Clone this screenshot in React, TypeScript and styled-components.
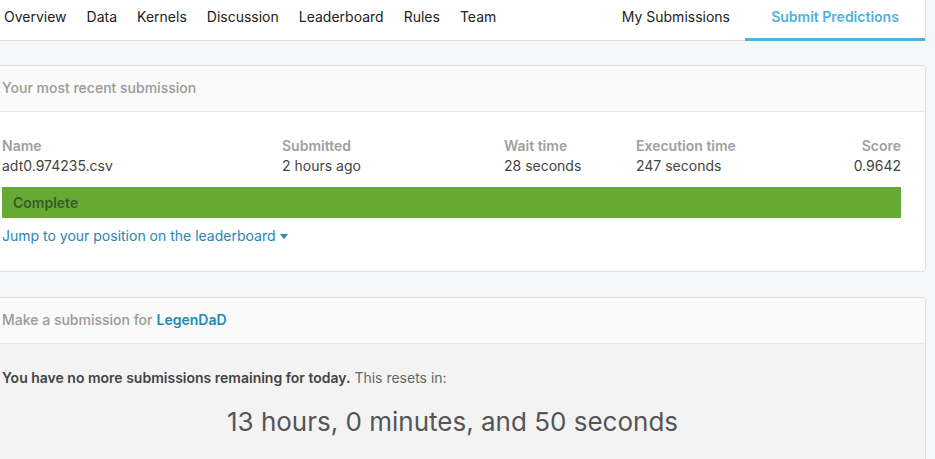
import React from "react";
import styled, { createGlobalStyle } from "styled-components";

const Global = createGlobalStyle`
  html, body { margin: 0; padding: 0; }
  body {
    background: #f5f7f8;
    font-family: Inter, "Liberation Sans", Arial, sans-serif;
    color: #222;
    overflow: hidden;
  }
`;

const Shell = styled.div`
  width: 926px;
`;

const Nav = styled.nav`
  display: flex;
  align-items: stretch;
  height: 41px;
  background: #fff;
  border-bottom: 1px solid #dedede;
  border-right: 1px solid #dedede;
  box-sizing: border-box;
  padding-left: 4px;
`;

const TabGroup = styled.div`
  display: flex;
  gap: 20px;
`;

const Tab = styled.a<{ $active?: boolean }>`
  display: flex;
  align-items: center;
  justify-content: center;
  font-size: 14px;
  font-weight: ${(p) => (p.$active ? 600 : 400)};
  color: ${(p) => (p.$active ? "#4bb2e1" : "#222")};
  padding-bottom: 6px;
  border-bottom: 3px solid ${(p) => (p.$active ? "#4bb2e1" : "transparent")};
  margin-bottom: -1px;
  box-sizing: border-box;
  white-space: nowrap;
`;

const SideTab = styled(Tab)`
  margin-right: 15px;
`;

const ActiveTab = styled(Tab)`
  width: 180px;
`;

const Spacer = styled.div`
  flex: 1;
`;

const Content = styled.main`
  display: flex;
  flex-direction: column;
  gap: 25px;
  padding-top: 24px;
  margin-left: -22px;
  width: 948px;
`;

const Card = styled.section`
  background: #fff;
  border: 1px solid #e0e0e0;
  border-radius: 4px;
  overflow: hidden;
`;

const CardHeader = styled.header`
  display: flex;
  align-items: center;
  height: 46px;
  padding-left: 23px;
  padding-bottom: 2px;
  box-sizing: border-box;
  background: #fafafa;
  border-bottom: 1px solid #e8e8e8;
  font-size: 14px;
  font-weight: 500;
  color: #999;
`;

const UserLink = styled.span`
  color: #1e8ab0;
  font-weight: 600;
  margin-left: 4px;
`;

const CardBody = styled.div`
  padding: 24px 24px 25px 23px;
`;

const StatsRow = styled.div`
  display: grid;
  grid-template-columns: 280px 222px 132px 1fr auto;
  font-size: 14px;
  line-height: 20px;
`;

const Stat = styled.div<{ $right?: boolean }>`
  display: flex;
  flex-direction: column;
  text-align: ${(p) => (p.$right ? "right" : "left")};
`;

const StatLabel = styled.span`
  color: #a0a0a0;
  font-weight: 600;
`;

const StatValue = styled.span`
  color: #444;
`;

const StatusBar = styled.div`
  margin-top: 11px;
  height: 31px;
  display: flex;
  align-items: center;
  padding-left: 11px;
  background: #67aa33;
  color: #3b5a29;
  font-size: 14px;
  font-weight: 600;
`;

const JumpLink = styled.a`
  display: inline-flex;
  align-items: center;
  gap: 4px;
  margin-top: 8px;
  font-size: 14px;
  color: #2687b0;
  line-height: 20px;
`;

const GrayBody = styled.div`
  background: #f3f3f3;
  padding: 24px 22px 40px 23px;
  height: 160px;
  box-sizing: border-box;
`;

const Notice = styled.p`
  margin: 0;
  font-size: 14px;
  line-height: 20px;
  color: #666;
`;

const Strong = styled.strong`
  font-weight: 600;
  color: #444;
`;

const Countdown = styled.div`
  margin-top: 18px;
  text-align: center;
  font-size: 26px;
  color: #555;
`;

export default function App() {
  return (
    <Shell>
      <Global />
      <Nav>
        <TabGroup>
          <Tab>Overview</Tab>
          <Tab>Data</Tab>
          <Tab>Kernels</Tab>
          <Tab>Discussion</Tab>
          <Tab>Leaderboard</Tab>
          <Tab>Rules</Tab>
          <Tab>Team</Tab>
        </TabGroup>
        <Spacer />
        <SideTab>My Submissions</SideTab>
        <ActiveTab $active>Submit Predictions</ActiveTab>
      </Nav>
      <Content>
        <Card>
          <CardHeader>Your most recent submission</CardHeader>
          <CardBody>
            <StatsRow>
              <Stat>
                <StatLabel>Name</StatLabel>
                <StatValue>adt0.974235.csv</StatValue>
              </Stat>
              <Stat>
                <StatLabel>Submitted</StatLabel>
                <StatValue>2 hours ago</StatValue>
              </Stat>
              <Stat>
                <StatLabel>Wait time</StatLabel>
                <StatValue>28 seconds</StatValue>
              </Stat>
              <Stat>
                <StatLabel>Execution time</StatLabel>
                <StatValue>247 seconds</StatValue>
              </Stat>
              <Stat $right>
                <StatLabel>Score</StatLabel>
                <StatValue>0.9642</StatValue>
              </Stat>
            </StatsRow>
            <StatusBar>Complete</StatusBar>
            <JumpLink>
              Jump to your position on the leaderboard
              <svg width="8" height="5" viewBox="0 0 8 5">
                <path d="M0 0h8L4 5z" fill="#2687b0" />
              </svg>
            </JumpLink>
          </CardBody>
        </Card>
        <Card>
          <CardHeader>
            Make a submission for <UserLink>LegenDaD</UserLink>
          </CardHeader>
          <GrayBody>
            <Notice>
              <Strong>You have no more submissions remaining for today.</Strong> This resets in:
            </Notice>
            <Countdown>13 hours, 0 minutes, and 50 seconds</Countdown>
          </GrayBody>
        </Card>
      </Content>
    </Shell>
  );
}
